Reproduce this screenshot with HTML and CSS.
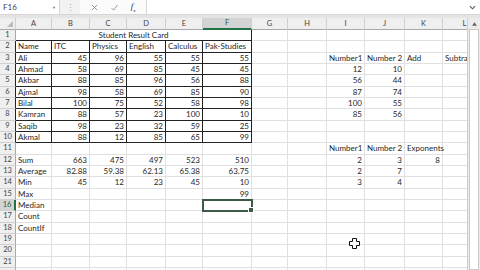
FILE: index.html
```html
<!DOCTYPE html>
<html lang="en">
<head>
  <meta charset="UTF-8" />
  <title>Student Result Card</title>
  <link rel="stylesheet" href="styles.css">
</head>
<body>

  <div class="formula-bar">
    <div class="name-box"><span>F16</span><span class="drop">&#9660;</span></div>
    <div class="bar-grip">&#8942;</div>
    <div class="bar-buttons">
      <svg class="icon" viewBox="0 0 8 8"><path d="M1 1L7 7M7 1L1 7" /></svg>
      <svg class="icon" viewBox="0 0 8 8"><path d="M0.5 4.5L3 7L7.5 1" /></svg>
      <span class="fx">f<sub>x</sub></span>
    </div>
    <div class="formula-input">
      <svg class="chevron" viewBox="0 0 8 5"><path d="M1 1L4 4L7 1" /></svg>
    </div>
  </div>

  <div class="workspace">
    <div class="sheet">
      <table class="grid">
        <colgroup>
          <col class="c-rh"><col class="c-a"><col class="c-b"><col class="c-c"><col class="c-d"><col class="c-e">
          <col class="c-f"><col class="c-g"><col class="c-h"><col class="c-i"><col class="c-j"><col class="c-k"><col class="c-l">
        </colgroup>
        <thead>
          <tr>
            <th class="corner"><span class="tri"></span></th>
            <th>A</th><th>B</th><th>C</th><th>D</th><th>E</th><th class="active">F</th>
            <th>G</th><th>H</th><th>I</th><th>J</th><th>K</th><th>L</th>
          </tr>
        </thead>
        <tbody>
          <tr>
            <th class="rh">1</th>
            <td colspan="6" class="title">Student Result Card</td>
            <td></td><td></td><td></td><td></td><td></td><td></td>
          </tr>
          <tr>
            <th class="rh edge">2</th>
            <td class="t">Name</td><td class="t">ITC</td><td class="t">Physics</td><td class="t">English</td><td class="t">Calculus</td><td class="t">Pak-Studies</td>
            <td></td><td></td><td></td><td></td><td></td><td></td>
          </tr>
          <tr>
            <th class="rh edge">3</th>
            <td class="t">Ali</td><td class="t n">45</td><td class="t n">96</td><td class="t n">55</td><td class="t n">55</td><td class="t n">55</td>
            <td></td><td></td><td>Number1</td><td>Number 2</td><td>Add</td><td class="clip">Subtraction</td>
          </tr>
          <tr>
            <th class="rh edge">4</th>
            <td class="t">Ahmad</td><td class="t n">58</td><td class="t n">69</td><td class="t n">85</td><td class="t n">45</td><td class="t n">45</td>
            <td></td><td></td><td class="n">12</td><td class="n">10</td><td></td><td></td>
          </tr>
          <tr>
            <th class="rh edge">5</th>
            <td class="t">Akbar</td><td class="t n">88</td><td class="t n">85</td><td class="t n">96</td><td class="t n">56</td><td class="t n">88</td>
            <td></td><td></td><td class="n">56</td><td class="n">44</td><td></td><td></td>
          </tr>
          <tr>
            <th class="rh edge">6</th>
            <td class="t">Ajmal</td><td class="t n">98</td><td class="t n">58</td><td class="t n">69</td><td class="t n">85</td><td class="t n">90</td>
            <td></td><td></td><td class="n">87</td><td class="n">74</td><td></td><td></td>
          </tr>
          <tr>
            <th class="rh edge">7</th>
            <td class="t">Bilal</td><td class="t n">100</td><td class="t n">75</td><td class="t n">52</td><td class="t n">58</td><td class="t n">98</td>
            <td></td><td></td><td class="n">100</td><td class="n">55</td><td></td><td></td>
          </tr>
          <tr>
            <th class="rh edge">8</th>
            <td class="t">Kamran</td><td class="t n">88</td><td class="t n">57</td><td class="t n">23</td><td class="t n">100</td><td class="t n">10</td>
            <td></td><td></td><td class="n">85</td><td class="n">56</td><td></td><td></td>
          </tr>
          <tr>
            <th class="rh edge">9</th>
            <td class="t">Saqib</td><td class="t n">98</td><td class="t n">23</td><td class="t n">32</td><td class="t n">59</td><td class="t n">25</td>
            <td></td><td></td><td></td><td></td><td></td><td></td>
          </tr>
          <tr>
            <th class="rh edge">10</th>
            <td class="t">Akmal</td><td class="t n">88</td><td class="t n">12</td><td class="t n">85</td><td class="t n">65</td><td class="t n">99</td>
            <td></td><td></td><td></td><td></td><td></td><td></td>
          </tr>
          <tr>
            <th class="rh">11</th>
            <td></td><td></td><td></td><td></td><td></td><td></td>
            <td></td><td></td><td>Number1</td><td>Number 2</td><td>Exponents</td><td></td>
          </tr>
          <tr>
            <th class="rh">12</th>
            <td>Sum</td><td class="n">663</td><td class="n">475</td><td class="n">497</td><td class="n">523</td><td class="n">510</td>
            <td></td><td></td><td class="n">2</td><td class="n">3</td><td class="n">8</td><td></td>
          </tr>
          <tr>
            <th class="rh">13</th>
            <td>Average</td><td class="n">82.88</td><td class="n">59.38</td><td class="n">62.13</td><td class="n">65.38</td><td class="n">63.75</td>
            <td></td><td></td><td class="n">2</td><td class="n">7</td><td></td><td></td>
          </tr>
          <tr>
            <th class="rh">14</th>
            <td>Min</td><td class="n">45</td><td class="n">12</td><td class="n">23</td><td class="n">45</td><td class="n">10</td>
            <td></td><td></td><td class="n">3</td><td class="n">4</td><td></td><td></td>
          </tr>
          <tr>
            <th class="rh">15</th>
            <td>Max</td><td></td><td></td><td></td><td></td><td class="n">99</td>
            <td></td><td></td><td></td><td></td><td></td><td></td>
          </tr>
          <tr>
            <th class="rh active">16</th>
            <td>Median</td><td></td><td></td><td></td><td></td><td class="sel"></td>
            <td></td><td></td><td></td><td></td><td></td><td></td>
          </tr>
          <tr>
            <th class="rh">17</th>
            <td>Count</td><td></td><td></td><td></td><td></td><td></td>
            <td></td><td></td><td></td><td></td><td></td><td></td>
          </tr>
          <tr>
            <th class="rh">18</th>
            <td>CountIf</td><td></td><td></td><td></td><td></td><td></td>
            <td></td><td></td><td></td><td></td><td></td><td></td>
          </tr>
          <tr>
            <th class="rh">19</th>
            <td></td><td></td><td></td><td></td><td></td><td></td>
            <td></td><td></td><td></td><td></td><td></td><td></td>
          </tr>
          <tr>
            <th class="rh">20</th>
            <td></td><td></td><td></td><td></td><td></td><td></td>
            <td></td><td></td><td></td><td></td><td></td><td></td>
          </tr>
          <tr>
            <th class="rh">21</th>
            <td></td><td></td><td></td><td></td><td></td><td></td>
            <td></td><td></td><td></td><td></td><td></td><td></td>
          </tr>
          <tr>
            <th class="rh"></th>
            <td></td><td></td><td></td><td></td><td></td><td></td>
            <td></td><td></td><td></td><td></td><td></td><td></td>
          </tr>
        </tbody>
      </table>
    </div>

    <div class="vscroll">
      <svg class="up" viewBox="0 0 6 4"><path d="M0 4L3 0L6 4Z" /></svg>
      <div class="thumb"></div>
    </div>
  </div>

  <!-- mouse pointer over the sheet -->
  <svg class="pointer" viewBox="0 0 11 11">
    <path d="M3.5 0.5H7.5V3.5H10.5V7.5H7.5V10.5H3.5V7.5H0.5V3.5H3.5Z" />
  </svg>

</body>
</html>
```

FILE: styles.css
```css
* {
  box-sizing: border-box;
}
body {
  margin: 0;
  width: 480px;
  height: 270px;
  overflow: hidden;
  position: relative;
  font-family: Lato, 'Liberation Sans', sans-serif;
  color: #1f1f1f;
  background: #fff;
}

/* formula bar */
.formula-bar {
  display: flex;
  height: 15px;
  background: #fff;
  border-bottom: 1px solid #d6d6d6;
  font-size: 8px;
  color: #444;
}
.name-box {
  width: 60px;
  display: flex;
  align-items: center;
  justify-content: space-between;
  padding: 0 3px;
  border-right: 1px solid #d6d6d6;
}
.name-box .drop {
  font-size: 4px;
  color: #777;
}
.bar-grip {
  width: 20px;
  display: flex;
  align-items: center;
  justify-content: center;
  background: #f2f2f2;
  color: #a8a8a8;
  font-size: 9px;
}
.bar-buttons {
  width: 66px;
  display: flex;
  align-items: center;
  justify-content: space-around;
  padding: 0 4px;
  background: #fbfbfb;
}
.icon {
  width: 7px;
  height: 7px;
  fill: none;
  stroke: #8a8a8a;
  stroke-width: 1;
}
.fx {
  font-family: 'Liberation Serif', serif;
  font-style: italic;
  font-size: 9px;
  color: #333;
}
.fx sub {
  font-size: 5px;
}
.formula-input {
  flex: 1;
  position: relative;
  border-left: 1px solid #d6d6d6;
}
.chevron {
  position: absolute;
  right: 4px;
  top: 5px;
  width: 7px;
  height: 5px;
  fill: none;
  stroke: #555;
  stroke-width: 1.2;
}

/* sheet */
.workspace {
  display: flex;
  height: 255px;
  padding-top: 3px;
  background: #e4e4e4;
}
.sheet {
  flex: none;
  width: 467px;
  overflow: hidden;
  background: #fff;
}
.grid {
  table-layout: fixed;
  border-collapse: separate;
  border-spacing: 0;
  width: 487px;
  font-size: 8px;
}
.c-rh { width: 16px; }
.c-a { width: 36px; }
.c-b { width: 38px; }
.c-c { width: 37px; }
.c-d { width: 39px; }
.c-e { width: 37px; }
.c-f { width: 49px; }
.c-g { width: 36px; }
.c-h { width: 39px; }
.c-i { width: 38px; }
.c-j { width: 40px; }
.c-k { width: 38px; }
.c-l { width: 44px; }

.grid thead th {
  height: 11px;
  padding: 0;
  font-weight: normal;
  font-size: 7.5px;
  color: #444;
  background: #efefef;
  border-right: 1px solid #d0d0d0;
  border-bottom: 1px solid #a9a9a9;
  line-height: 10px;
}
.grid thead th.active {
  background: #d3d3d3;
  color: #1e5c38;
  border-bottom: 2px solid #217346;
}
.grid .corner {
  position: relative;
}
.tri {
  position: absolute;
  right: 2px;
  bottom: 2px;
  border-left: 6px solid transparent;
  border-bottom: 6px solid #b9b9b9;
}
.grid tbody tr {
  height: 11.33px;
}
.grid td {
  padding: 0 2px;
  line-height: 10px;
  white-space: nowrap;
  overflow: visible;
  border-right: 1px solid #e0e0e0;
  border-bottom: 1px solid #e0e0e0;
}
.grid td.clip {
  overflow: hidden;
  text-overflow: clip;
}
.grid th.rh {
  padding: 0;
  font-weight: normal;
  font-size: 7.5px;
  color: #444;
  background: #efefef;
  border-right: 1px solid #a9a9a9;
  border-bottom: 1px solid #d0d0d0;
  line-height: 10px;
}
.grid th.rh.edge {
  border-right-color: #222;
}
.grid th.rh.active {
  background: #d3d3d3;
  color: #1e5c38;
  border-right: 2px solid #217346;
}
.grid td.n {
  text-align: right;
}
.grid td.title {
  text-align: center;
  border-right: 1px solid #222;
  border-bottom: 1px solid #222;
}
.grid td.t {
  border-right: 1px solid #222;
  border-bottom: 1px solid #222;
}
.grid td.sel {
  position: relative;
  outline: 2px solid #3d5a47;
  outline-offset: -1px;
}
.grid td.sel::after {
  content: '';
  position: absolute;
  right: -3px;
  bottom: -3px;
  width: 4px;
  height: 4px;
  background: #3d5a47;
  border: 1px solid #fff;
}

/* scrollbar */
.vscroll {
  flex: none;
  width: 13px;
  display: flex;
  flex-direction: column;
  align-items: center;
  background: #ececec;
  border-left: 1px solid #cfcfcf;
}
.up {
  width: 5px;
  height: 4px;
  margin: 4px 0 3px;
  fill: #666;
}
.thumb {
  width: 10px;
  flex: 1;
  background: #fff;
  border: 1px solid #c9c9c9;
}

.pointer {
  position: absolute;
  left: 349px;
  top: 238px;
  width: 11px;
  height: 11px;
  fill: #fff;
  stroke: #111;
  stroke-width: 1;
}
```
